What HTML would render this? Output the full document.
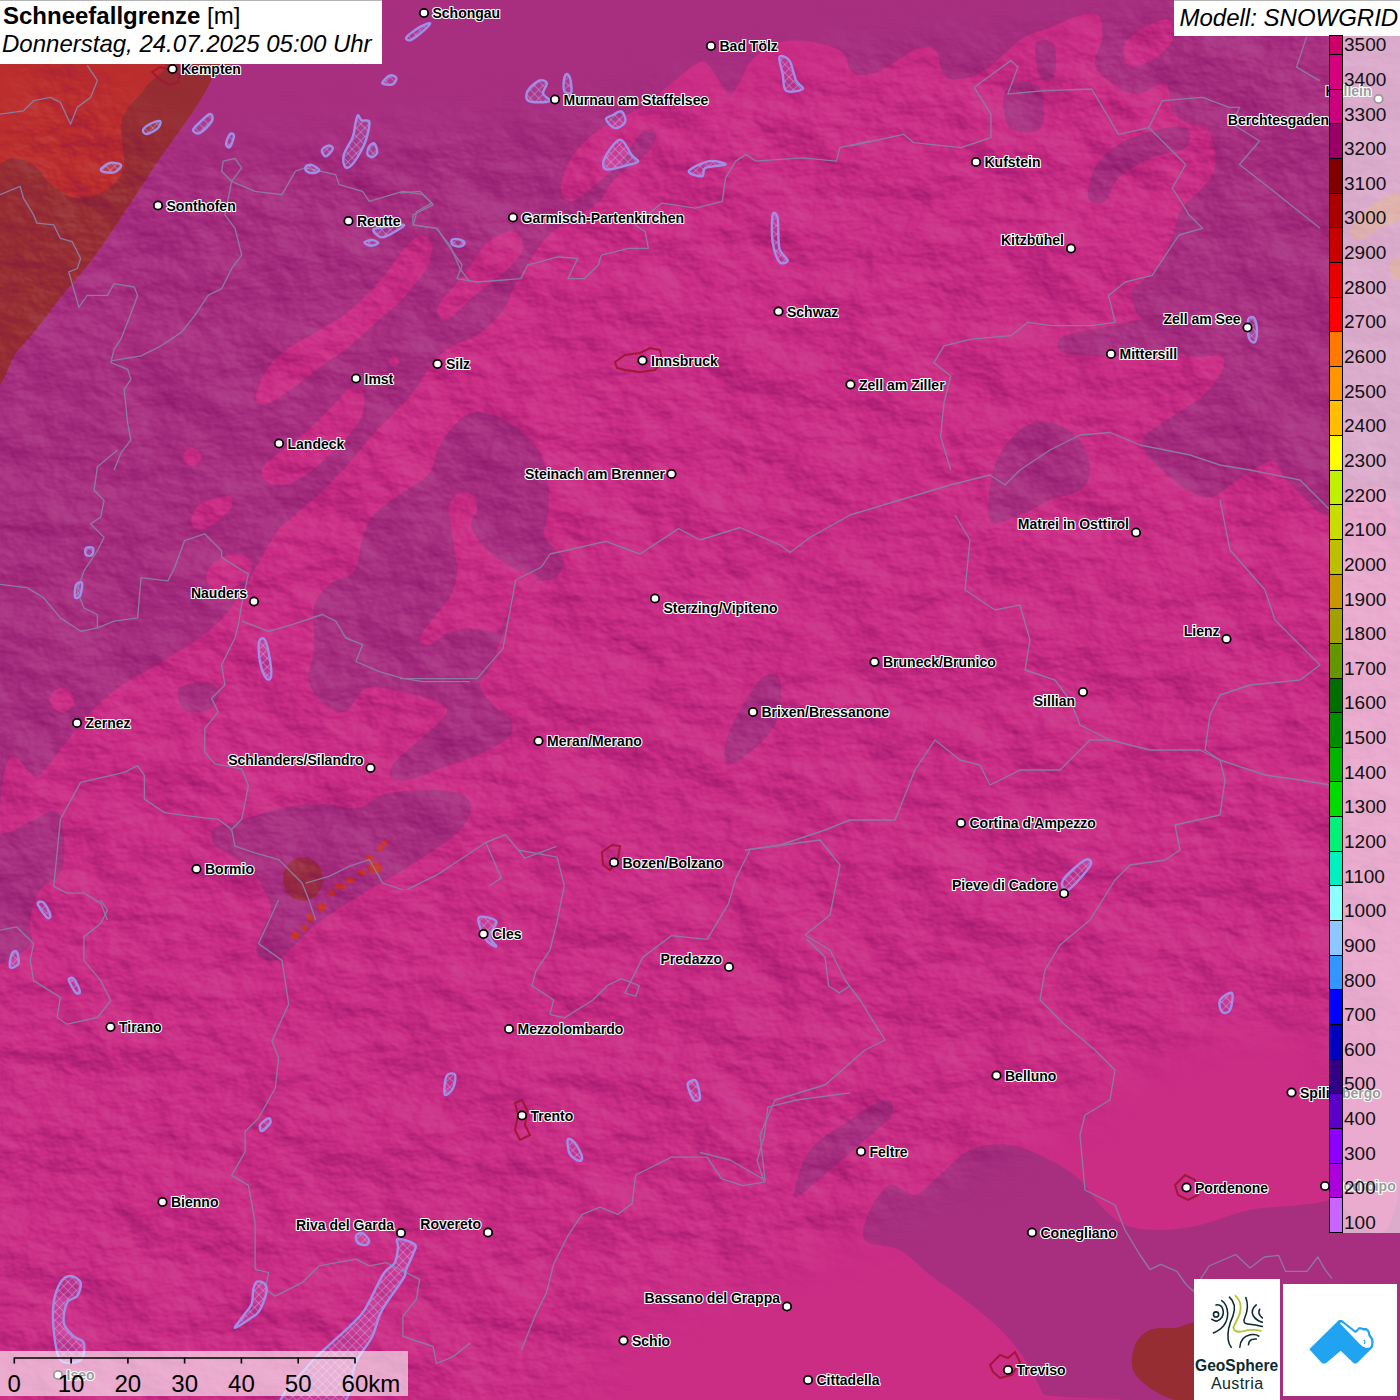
<!DOCTYPE html>
<html><head><meta charset="utf-8">
<style>
html,body{margin:0;padding:0;width:1400px;height:1400px;overflow:hidden;background:#a82f80;}
body{position:relative;font-family:"Liberation Sans",sans-serif;}
svg{position:absolute;left:0;top:0;}
#labels text{font-family:"Liberation Sans",sans-serif;font-size:14px;font-weight:bold;fill:#000;stroke:#fff;stroke-width:2.2px;paint-order:stroke;stroke-linejoin:round;}
.title{position:absolute;left:0;top:0;width:382px;height:64px;background:#fff;border-top:1px solid #b4b4b4;box-sizing:border-box;}
.t1{position:absolute;left:3px;top:1px;font-size:24px;font-weight:bold;white-space:nowrap;color:#000;}
.t1 span{font-weight:normal;}
.t2{position:absolute;left:2px;top:29px;font-size:24px;font-style:italic;white-space:nowrap;color:#000;}
.model{position:absolute;left:1173.5px;top:0;width:227px;height:35.5px;background:#fff;border-top:1px solid #b4b4b4;box-sizing:border-box;}
.model div{position:absolute;left:6px;top:3px;font-size:24px;font-style:italic;white-space:nowrap;}
.legbg{position:absolute;left:1343px;top:35px;width:57px;height:1198px;background:rgba(255,255,255,0.6);}
.bar{position:absolute;left:1329px;top:35px;width:14px;height:1198px;border:1px solid #000;box-sizing:border-box;overflow:hidden;}
.seg{position:absolute;left:0;width:12px;box-sizing:border-box;}
.lab{position:absolute;left:1344px;font-size:19px;color:#111;white-space:nowrap;line-height:22px;}
.scale{position:absolute;left:0;top:1351px;width:408px;height:45px;background:rgba(255,255,255,0.6);}
.sl{position:absolute;top:1370px;font-size:24px;line-height:28px;color:#000;white-space:nowrap;}
.geo{position:absolute;left:1194px;top:1279px;width:86px;height:121px;background:#fff;}
.snow{position:absolute;left:1283px;top:1284px;width:114px;height:112px;background:#fff;}
.g1{position:absolute;left:1px;top:78px;font-size:15.6px;font-weight:bold;color:#0b2a30;white-space:nowrap;}
.g2{position:absolute;left:17px;top:96px;font-size:16px;letter-spacing:0.4px;color:#0b2a30;white-space:nowrap;}
</style></head><body>
<svg width="1400" height="1400" viewBox="0 0 1400 1400">
<defs><pattern id="hatch" width="6" height="6" patternUnits="userSpaceOnUse" patternTransform="rotate(45)"><rect width="6" height="6" fill="rgba(190,160,240,0.12)"/><path d="M0,0 L0,6 M0,0 L6,0" stroke="rgba(205,190,255,0.75)" stroke-width="1"/></pattern></defs>
<rect x="0" y="0" width="1400" height="1400" fill="#a82f80"/>
<path d="M0.0,810.0 C6.7,705.8 26.7,789.2 40.0,775.0 C53.3,760.8 67.5,739.2 80.0,725.0 C92.5,710.8 100.8,700.8 115.0,690.0 C129.2,679.2 149.2,670.0 165.0,660.0 C180.8,650.0 197.5,640.8 210.0,630.0 C222.5,619.2 229.3,610.7 240.0,595.0 C250.7,579.3 265.0,549.2 274.0,536.0 C283.0,522.8 286.3,523.2 294.0,516.0 C301.7,508.8 311.8,500.7 320.0,493.0 C328.2,485.3 336.3,477.2 343.0,470.0 C349.7,462.8 354.3,456.7 360.0,450.0 C365.7,443.3 370.3,437.2 377.0,430.0 C383.7,422.8 393.3,414.2 400.0,407.0 C406.7,399.8 412.7,392.7 417.0,387.0 C421.3,381.3 421.2,379.2 426.0,373.0 C430.8,366.8 437.0,356.7 446.0,350.0 C455.0,343.3 470.5,339.7 480.0,333.0 C489.5,326.3 497.3,317.7 503.0,310.0 C508.7,302.3 509.8,294.7 514.0,287.0 C518.2,279.3 522.3,272.5 528.0,264.0 C533.7,255.5 539.8,244.0 548.0,236.0 C556.2,228.0 568.3,221.8 577.0,216.0 C585.7,210.2 594.2,206.7 600.0,201.0 C605.8,195.3 606.7,188.0 612.0,182.0 C617.3,176.0 625.7,170.3 632.0,165.0 C638.3,159.7 646.0,155.3 650.0,150.0 C654.0,144.7 656.8,136.3 656.0,133.0 C655.2,129.7 649.0,128.0 645.0,130.0 C641.0,132.0 635.8,139.7 632.0,145.0 C628.2,150.3 626.2,157.0 622.0,162.0 C617.8,167.0 612.8,170.0 607.0,175.0 C601.2,180.0 592.8,187.7 587.0,192.0 C581.2,196.3 576.2,200.5 572.0,201.0 C567.8,201.5 563.7,198.5 562.0,195.0 C560.3,191.5 560.3,186.3 562.0,180.0 C563.7,173.7 567.3,164.2 572.0,157.0 C576.7,149.8 583.3,142.8 590.0,137.0 C596.7,131.2 602.8,127.3 612.0,122.0 C621.2,116.7 634.5,112.0 645.0,105.0 C655.5,98.0 665.8,87.2 675.0,80.0 C684.2,72.8 694.2,64.2 700.0,62.0 C705.8,59.8 706.7,63.7 710.0,67.0 C713.3,70.3 716.7,77.5 720.0,82.0 C723.3,86.5 726.7,94.0 730.0,94.0 C733.3,94.0 736.7,87.3 740.0,82.0 C743.3,76.7 745.8,67.3 750.0,62.0 C754.2,56.7 759.7,53.3 765.0,50.0 C770.3,46.7 775.0,43.5 782.0,42.0 C789.0,40.5 798.7,40.2 807.0,41.0 C815.3,41.8 825.7,44.7 832.0,47.0 C838.3,49.3 842.0,51.2 845.0,55.0 C848.0,58.8 847.5,66.7 850.0,70.0 C852.5,73.3 855.5,74.6 860.0,75.0 C864.5,75.4 870.2,74.9 876.9,72.2 C883.6,69.5 893.7,62.6 900.4,58.7 C907.1,54.8 911.2,50.1 917.1,48.7 C923.0,47.3 931.1,45.9 935.6,50.4 C940.1,54.9 939.8,70.8 944.0,75.5 C948.2,80.2 954.1,79.7 960.8,78.9 C967.5,78.1 977.0,74.7 984.3,70.5 C991.6,66.3 997.7,59.3 1004.4,53.7 C1011.1,48.1 1016.8,41.4 1024.6,36.9 C1032.4,32.4 1041.9,30.5 1051.4,26.9 C1060.9,23.3 1073.8,16.9 1081.6,15.1 C1089.4,13.3 1094.9,12.5 1098.4,16.1 C1101.9,19.7 1103.0,28.9 1102.4,36.9 C1101.8,44.8 1094.0,56.5 1095.0,63.8 C1096.0,71.1 1101.8,75.6 1108.5,80.6 C1115.2,85.6 1125.8,93.5 1135.3,94.0 C1144.8,94.5 1159.3,81.1 1165.5,83.9 C1171.7,86.7 1168.4,104.1 1172.3,110.8 C1176.2,117.5 1183.4,121.4 1189.0,124.2 C1194.6,127.0 1201.6,123.7 1205.8,127.6 C1210.0,131.5 1212.8,140.4 1214.2,147.7 C1215.6,155.0 1216.7,163.9 1214.2,171.2 C1211.7,178.5 1204.4,185.2 1199.1,191.3 C1193.8,197.5 1186.8,200.8 1182.3,208.1 C1177.8,215.4 1175.6,226.1 1172.3,235.0 C1169.0,243.9 1166.7,254.5 1162.2,261.8 C1157.7,269.1 1150.4,273.6 1145.4,278.6 C1140.4,283.6 1133.1,285.9 1132.0,292.0 C1130.9,298.1 1134.2,308.8 1138.7,315.5 C1143.2,322.2 1151.0,325.6 1158.8,332.3 C1166.6,339.0 1175.6,351.9 1185.7,355.8 C1195.8,359.7 1213.2,353.6 1219.3,355.8 C1225.4,358.0 1225.4,362.5 1222.6,369.2 C1219.8,375.9 1210.9,388.3 1202.5,396.1 C1194.1,403.9 1181.9,409.6 1172.3,416.2 C1162.7,422.8 1149.5,430.0 1145.0,436.0 C1140.5,442.0 1142.2,446.3 1145.0,452.0 C1147.8,457.7 1155.0,463.7 1162.0,470.0 C1169.0,476.3 1178.7,485.5 1187.0,490.0 C1195.3,494.5 1203.7,498.7 1212.0,497.0 C1220.3,495.3 1228.7,485.3 1237.0,480.0 C1245.3,474.7 1255.7,468.0 1262.0,465.0 C1268.3,462.0 1270.8,459.5 1275.0,462.0 C1279.2,464.5 1280.8,472.8 1287.0,480.0 C1293.2,487.2 1304.8,498.8 1312.0,505.0 C1319.2,511.2 1315.3,511.2 1330.0,517.0 C1344.7,522.8 1388.3,429.5 1400.0,540.0 C1411.7,650.5 1411.7,1070.0 1400.0,1180.0 C1388.3,1290.0 1346.7,1195.8 1330.0,1200.0 C1313.3,1204.2 1313.3,1203.3 1300.0,1205.0 C1286.7,1206.7 1266.7,1206.7 1250.0,1210.0 C1233.3,1213.3 1215.0,1221.7 1200.0,1225.0 C1185.0,1228.3 1172.5,1230.0 1160.0,1230.0 C1147.5,1230.0 1135.0,1229.2 1125.0,1225.0 C1115.0,1220.8 1107.5,1212.5 1100.0,1205.0 C1092.5,1197.5 1088.3,1187.5 1080.0,1180.0 C1071.7,1172.5 1061.7,1165.8 1050.0,1160.0 C1038.3,1154.2 1023.3,1146.7 1010.0,1145.0 C996.7,1143.3 981.7,1145.0 970.0,1150.0 C958.3,1155.0 949.2,1167.5 940.0,1175.0 C930.8,1182.5 923.3,1193.3 915.0,1195.0 C906.7,1196.7 897.5,1182.5 890.0,1185.0 C882.5,1187.5 874.2,1200.8 870.0,1210.0 C865.8,1219.2 860.0,1233.3 865.0,1240.0 C870.0,1246.7 889.2,1244.2 900.0,1250.0 C910.8,1255.8 920.5,1267.7 930.0,1275.0 C939.5,1282.3 947.2,1286.7 957.0,1294.0 C966.8,1301.3 980.0,1311.2 989.0,1319.0 C998.0,1326.8 1004.3,1333.2 1011.0,1341.0 C1017.7,1348.8 1023.7,1357.2 1029.0,1366.0 C1034.3,1374.8 1040.2,1388.3 1043.0,1394.0 C1045.8,1399.7 1219.8,1399.0 1046.0,1400.0 C872.2,1401.0 174.3,1498.3 0.0,1400.0 C-174.3,1301.7 -6.7,914.2 0.0,810.0Z" fill="#cb2d85" />
<path d="M485.7,412.9 C494.3,414.3 505.7,419.8 514.3,425.7 C522.9,431.7 531.7,440.5 537.1,448.6 C542.6,456.7 545.2,464.3 547.1,474.3 C549.0,484.3 549.0,498.6 548.6,508.6 C548.1,518.6 543.1,527.4 544.3,534.3 C545.5,541.2 552.4,545.5 555.7,550.0 C559.0,554.5 564.5,556.7 564.3,561.4 C564.0,566.2 559.8,575.0 554.3,578.6 C548.8,582.1 538.1,579.3 531.4,582.9 C524.8,586.4 519.0,591.4 514.3,600.0 C509.5,608.6 506.7,623.3 502.9,634.3 C499.0,645.2 495.2,657.1 491.4,665.7 C487.6,674.3 479.0,678.6 480.0,685.7 C481.0,692.9 491.9,702.9 497.1,708.6 C502.4,714.3 509.5,715.2 511.4,720.0 C513.3,724.8 513.8,731.4 508.6,737.1 C503.3,742.9 491.4,749.0 480.0,754.3 C468.6,759.5 451.9,764.3 440.0,768.6 C428.1,772.9 416.7,778.6 408.6,780.0 C400.5,781.4 393.8,780.0 391.4,777.1 C389.0,774.3 389.0,769.5 394.3,762.9 C399.5,756.2 414.3,745.2 422.9,737.1 C431.4,729.0 442.9,720.0 445.7,714.3 C448.6,708.6 447.6,706.7 440.0,702.9 C432.4,699.0 412.4,693.8 400.0,691.4 C387.6,689.0 374.8,685.2 365.7,688.6 C356.7,691.9 352.9,709.0 345.7,711.4 C338.6,713.8 329.0,708.1 322.9,702.9 C316.7,697.6 310.0,689.0 308.6,680.0 C307.1,671.0 313.3,661.0 314.3,648.6 C315.2,636.2 311.4,616.7 314.3,605.7 C317.1,594.8 324.8,588.6 331.4,582.9 C338.1,577.1 349.0,579.0 354.3,571.4 C359.5,563.8 359.5,546.7 362.9,537.1 C366.2,527.6 368.1,521.4 374.3,514.3 C380.5,507.1 391.0,501.0 400.0,494.3 C409.0,487.6 421.9,482.4 428.6,474.3 C435.2,466.2 434.3,455.2 440.0,445.7 C445.7,436.2 455.2,422.6 462.9,417.1 C470.5,411.7 477.1,411.4 485.7,412.9Z" fill="#a82f80" />
<path d="M214.0,829.0 C217.7,825.3 224.7,825.5 236.0,822.0 C247.3,818.5 267.8,811.0 282.0,808.0 C296.2,805.0 308.5,804.0 321.0,804.0 C333.5,804.0 346.2,809.7 357.0,808.0 C367.8,806.3 374.0,797.0 386.0,794.0 C398.0,791.0 416.5,790.0 429.0,790.0 C441.5,790.0 454.0,791.0 461.0,794.0 C468.0,797.0 471.7,801.5 471.0,808.0 C470.3,814.5 467.0,823.5 457.0,833.0 C447.0,842.5 427.7,854.3 411.0,865.0 C394.3,875.7 373.2,886.8 357.0,897.0 C340.8,907.2 325.8,916.5 314.0,926.0 C302.2,935.5 293.2,948.2 286.0,954.0 C278.8,959.8 275.8,961.0 271.0,961.0 C266.2,961.0 258.7,958.7 257.0,954.0 C255.3,949.3 258.7,940.2 261.0,933.0 C263.3,925.8 270.5,918.2 271.0,911.0 C271.5,903.8 267.5,897.0 264.0,890.0 C260.5,883.0 255.8,875.0 250.0,869.0 C244.2,863.0 235.0,858.2 229.0,854.0 C223.0,849.8 216.5,848.2 214.0,844.0 C211.5,839.8 210.3,832.7 214.0,829.0Z" fill="#a82f80" />
<path d="M-10.0,850.0 C-5.8,828.3 7.3,835.2 15.0,830.0 C22.7,824.8 29.0,822.2 36.0,819.0 C43.0,815.8 52.3,807.5 57.0,811.0 C61.7,814.5 63.3,829.8 64.0,840.0 C64.7,850.2 65.0,863.7 61.0,872.0 C57.0,880.3 45.2,882.0 40.0,890.0 C34.8,898.0 31.7,910.8 30.0,920.0 C28.3,929.2 35.0,937.5 30.0,945.0 C25.0,952.5 6.7,962.5 0.0,965.0 C-6.7,967.5 -8.3,979.2 -10.0,960.0 C-11.7,940.8 -14.2,871.7 -10.0,850.0Z" fill="#a82f80" />
<path d="M178.0,690.0 C179.7,685.5 188.8,683.7 195.0,683.0 C201.2,682.3 211.2,683.2 215.0,686.0 C218.8,688.8 219.7,695.8 218.0,700.0 C216.3,704.2 210.5,709.3 205.0,711.0 C199.5,712.7 189.5,713.5 185.0,710.0 C180.5,706.5 176.3,694.5 178.0,690.0Z" fill="#a82f80" />
<path d="M990.0,520.0 C985.8,511.7 990.0,480.0 995.0,465.0 C1000.0,450.0 1010.8,437.2 1020.0,430.0 C1029.2,422.8 1040.0,420.3 1050.0,422.0 C1060.0,423.7 1073.3,432.0 1080.0,440.0 C1086.7,448.0 1090.0,461.7 1090.0,470.0 C1090.0,478.3 1086.7,485.0 1080.0,490.0 C1073.3,495.0 1060.0,495.8 1050.0,500.0 C1040.0,504.2 1030.0,511.7 1020.0,515.0 C1010.0,518.3 994.2,528.3 990.0,520.0Z" fill="#a82f80" />
<path d="M725.0,760.0 C723.3,755.0 724.2,743.3 730.0,730.0 C735.8,716.7 751.7,688.3 760.0,680.0 C768.3,671.7 777.5,672.5 780.0,680.0 C782.5,687.5 781.7,711.7 775.0,725.0 C768.3,738.3 748.3,754.2 740.0,760.0 C731.7,765.8 726.7,765.0 725.0,760.0Z" fill="#a82f80" />
<path d="M795.0,1190.0 C796.7,1182.5 800.8,1161.7 810.0,1150.0 C819.2,1138.3 837.5,1128.3 850.0,1120.0 C862.5,1111.7 878.0,1100.8 885.0,1100.0 C892.0,1099.2 895.3,1108.3 892.0,1115.0 C888.7,1121.7 875.3,1130.8 865.0,1140.0 C854.7,1149.2 840.8,1160.8 830.0,1170.0 C819.2,1179.2 805.8,1191.7 800.0,1195.0 C794.2,1198.3 793.3,1197.5 795.0,1190.0Z" fill="#a82f80" />
<path d="M1058.0,346.0 C1057.5,342.9 1057.0,338.8 1064.8,335.7 C1072.6,332.6 1090.5,330.1 1105.0,327.3 C1119.5,324.5 1137.8,318.4 1152.0,318.9 C1166.2,319.3 1183.7,324.5 1190.0,330.0 C1196.3,335.5 1196.3,348.0 1190.0,352.0 C1183.7,356.0 1163.9,353.4 1152.0,354.0 C1140.1,354.6 1132.6,355.8 1118.6,355.8 C1104.6,355.8 1078.1,355.6 1068.0,354.0 C1057.9,352.4 1058.5,349.1 1058.0,346.0Z" fill="#a82f80" />
<path d="M1036.0,43.0 C1038.3,37.7 1051.0,39.3 1054.0,45.0 C1057.0,50.7 1056.3,71.7 1054.0,77.0 C1051.7,82.3 1043.0,82.7 1040.0,77.0 C1037.0,71.3 1033.7,48.3 1036.0,43.0Z" fill="#a82f80" />
<path d="M1004.0,95.0 C1005.7,87.3 1013.8,82.8 1020.0,82.0 C1026.2,81.2 1037.5,82.3 1041.0,90.0 C1044.5,97.7 1046.2,121.7 1041.0,128.0 C1035.8,134.3 1016.2,133.5 1010.0,128.0 C1003.8,122.5 1002.3,102.7 1004.0,95.0Z" fill="#a82f80" />
<path d="M1088.3,198.0 C1086.6,192.4 1090.0,176.8 1095.0,167.8 C1100.0,158.9 1109.1,150.5 1118.6,144.3 C1128.1,138.2 1140.8,133.7 1152.0,130.9 C1163.2,128.1 1180.1,124.8 1185.7,127.6 C1191.3,130.4 1191.3,142.7 1185.7,147.7 C1180.1,152.7 1163.2,152.8 1152.0,157.8 C1140.8,162.8 1126.4,170.6 1118.6,177.9 C1110.8,185.2 1110.0,198.1 1105.0,201.4 C1100.0,204.8 1090.0,203.6 1088.3,198.0Z" fill="#a82f80" />
<path d="M457.1,494.3 C461.0,491.9 468.1,491.9 471.4,494.3 C474.8,496.7 477.1,503.3 477.1,508.6 C477.1,513.8 470.0,519.0 471.4,525.7 C472.9,532.4 478.6,541.4 485.7,548.6 C492.9,555.7 505.7,563.8 514.3,568.6 C522.9,573.3 536.7,572.9 537.1,577.1 C537.6,581.4 522.4,587.6 517.1,594.3 C511.9,601.0 509.0,611.0 505.7,617.1 C502.4,623.3 503.3,629.5 497.1,631.4 C491.0,633.3 477.1,628.1 468.6,628.6 C460.0,629.0 452.4,631.4 445.7,634.3 C439.0,637.1 432.9,645.2 428.6,645.7 C424.3,646.2 419.0,641.9 420.0,637.1 C421.0,632.4 429.0,624.3 434.3,617.1 C439.5,610.0 447.6,601.9 451.4,594.3 C455.2,586.7 456.7,579.0 457.1,571.4 C457.6,563.8 455.2,556.2 454.3,548.6 C453.3,541.0 452.4,532.4 451.4,525.7 C450.5,519.0 447.6,513.8 448.6,508.6 C449.5,503.3 453.3,496.7 457.1,494.3Z" fill="#cb2d85" />
<path d="M420.0,235.7 C424.3,235.2 430.0,239.5 431.4,244.3 C432.9,249.0 431.0,258.1 428.6,264.3 C426.2,270.5 421.9,275.2 417.1,281.4 C412.4,287.6 406.7,294.8 400.0,301.4 C393.3,308.1 385.7,313.8 377.1,321.4 C368.6,329.0 358.1,339.5 348.6,347.1 C339.0,354.8 329.0,360.5 320.0,367.1 C311.0,373.8 303.3,381.0 294.3,387.1 C285.2,393.3 272.1,402.9 265.7,404.3 C259.3,405.7 255.2,401.9 255.7,395.7 C256.2,389.5 263.6,374.8 268.6,367.1 C273.6,359.5 278.1,355.7 285.7,350.0 C293.3,344.3 304.8,338.6 314.3,332.9 C323.8,327.1 333.8,322.4 342.9,315.7 C351.9,309.0 361.0,300.5 368.6,292.9 C376.2,285.2 382.4,277.6 388.6,270.0 C394.8,262.4 400.5,252.9 405.7,247.1 C411.0,241.4 415.7,236.2 420.0,235.7Z" fill="#cb2d85" />
<path d="M508.6,231.4 C514.5,230.5 519.5,234.5 521.4,238.6 C523.3,242.6 523.6,249.5 520.0,255.7 C516.4,261.9 507.6,269.0 500.0,275.7 C492.4,282.4 482.9,288.6 474.3,295.7 C465.7,302.9 454.8,315.7 448.6,318.6 C442.4,321.4 438.1,316.2 437.1,312.9 C436.2,309.5 438.1,305.2 442.9,298.6 C447.6,291.9 458.6,281.9 465.7,272.9 C472.9,263.8 478.6,251.2 485.7,244.3 C492.9,237.4 502.6,232.4 508.6,231.4Z" fill="#cb2d85" />
<path d="M351.4,387.1 C356.7,384.8 361.0,388.6 362.9,392.9 C364.8,397.1 365.2,405.7 362.9,412.9 C360.5,420.0 354.3,428.6 348.6,435.7 C342.9,442.9 335.2,449.5 328.6,455.7 C321.9,461.9 315.7,468.1 308.6,472.9 C301.4,477.6 292.9,482.9 285.7,484.3 C278.6,485.7 269.5,484.3 265.7,481.4 C261.9,478.6 260.0,472.4 262.9,467.1 C265.7,461.9 275.2,456.2 282.9,450.0 C290.5,443.8 300.5,437.1 308.6,430.0 C316.7,422.9 324.3,414.3 331.4,407.1 C338.6,400.0 346.2,389.5 351.4,387.1Z" fill="#cb2d85" />
<path d="M228.6,495.7 C233.8,496.2 233.3,502.9 231.4,507.1 C229.5,511.4 222.4,517.6 217.1,521.4 C211.9,525.2 204.3,530.0 200.0,530.0 C195.7,530.0 191.4,525.7 191.4,521.4 C191.4,517.1 193.8,508.6 200.0,504.3 C206.2,500.0 223.3,495.2 228.6,495.7Z" fill="#cb2d85" />
<path d="M1125.0,43.6 C1127.8,37.2 1138.1,30.8 1145.4,26.9 C1152.7,23.0 1164.5,17.9 1169.0,20.1 C1173.5,22.3 1175.1,33.6 1172.3,40.3 C1169.5,47.0 1159.3,56.2 1152.0,60.4 C1144.7,64.6 1133.1,68.3 1128.6,65.5 C1124.1,62.7 1122.2,50.0 1125.0,43.6Z" fill="#cb2d85" />
<ellipse cx="229" cy="572" rx="24" ry="16" transform="rotate(-25 229 572)" fill="#cb2d85"/>
<circle cx="394" cy="361" r="5" fill="#cb2d85"/>
<circle cx="62" cy="700" r="12" fill="#cb2d85"/>
<circle cx="192" cy="457" r="9" fill="#cb2d85"/>
<path d="M-10.0,60.0 C27.3,8.3 177.0,57.0 214.0,60.0 C251.0,63.0 214.2,71.5 212.0,78.0 C209.8,84.5 205.8,91.0 201.0,99.0 C196.2,107.0 189.8,116.2 183.0,126.0 C176.2,135.8 167.7,146.8 160.0,158.0 C152.3,169.2 145.3,180.3 137.0,193.0 C128.7,205.7 118.3,221.8 110.0,234.0 C101.7,246.2 94.7,256.2 87.0,266.0 C79.3,275.8 71.7,283.5 64.0,293.0 C56.3,302.5 48.7,313.5 41.0,323.0 C33.3,332.5 26.5,342.2 18.0,350.0 C9.5,357.8 -5.3,418.3 -10.0,370.0 C-14.7,321.7 -47.3,111.7 -10.0,60.0Z" fill="#962d32" />
<path d="M-10.0,60.0 C17.5,43.7 129.0,55.5 155.0,60.0 C181.0,64.5 150.5,79.0 146.0,87.0 C141.5,95.0 132.2,101.8 128.0,108.0 C123.8,114.2 121.8,117.5 121.0,124.0 C120.2,130.5 122.7,139.3 123.0,147.0 C123.3,154.7 125.2,163.2 123.0,170.0 C120.8,176.8 116.0,183.5 110.0,188.0 C104.0,192.5 93.8,195.7 87.0,197.0 C80.2,198.3 75.2,198.3 69.0,196.0 C62.8,193.7 55.8,188.2 50.0,183.0 C44.2,177.8 40.0,169.2 34.0,165.0 C28.0,160.8 21.3,159.2 14.0,158.0 C6.7,156.8 -6.0,174.3 -10.0,158.0 C-14.0,141.7 -37.5,76.3 -10.0,60.0Z" fill="#bc2d2d" />
<ellipse cx="303" cy="879" rx="20" ry="22" fill="#962d32" opacity="0.8"/>
<path d="M1350.0,232.0 C1351.3,226.7 1359.7,214.5 1368.0,208.0 C1376.3,201.5 1394.7,191.3 1400.0,193.0 C1405.3,194.7 1403.3,212.2 1400.0,218.0 C1396.7,223.8 1386.7,224.3 1380.0,228.0 C1373.3,231.7 1365.0,239.3 1360.0,240.0 C1355.0,240.7 1348.7,237.3 1350.0,232.0Z" fill="#b0402e" />
<path d="M1390.0,262.0 C1391.3,259.0 1398.3,255.0 1400.0,258.0 C1401.7,261.0 1401.3,277.0 1400.0,280.0 C1398.7,283.0 1393.7,279.0 1392.0,276.0 C1390.3,273.0 1388.7,265.0 1390.0,262.0Z" fill="#b0402e" />
<ellipse cx="375" cy="868" rx="7" ry="6" fill="#c83228"/>
<ellipse cx="370" cy="858" rx="4" ry="3" fill="#c83228"/>
<ellipse cx="380" cy="848" rx="3" ry="3" fill="#c83228"/>
<ellipse cx="350" cy="880" rx="5" ry="3" fill="#c83228"/>
<ellipse cx="340" cy="886" rx="6" ry="3" fill="#c83228"/>
<ellipse cx="332" cy="893" rx="4" ry="3" fill="#c83228"/>
<ellipse cx="322" cy="907" rx="4" ry="4" fill="#c83228"/>
<ellipse cx="310" cy="918" rx="3" ry="5" fill="#c83228"/>
<ellipse cx="305" cy="928" rx="3" ry="3" fill="#c83228"/>
<ellipse cx="295" cy="935" rx="4" ry="4" fill="#c83228"/>
<ellipse cx="362" cy="873" rx="4" ry="3" fill="#c83228"/>
<ellipse cx="385" cy="843" rx="3" ry="3" fill="#c83228"/>
<path d="M1150.0,1330.0 C1143.3,1332.8 1137.8,1338.3 1135.0,1345.0 C1132.2,1351.7 1130.5,1362.8 1133.0,1370.0 C1135.5,1377.2 1143.0,1383.0 1150.0,1388.0 C1157.0,1393.0 1166.7,1398.0 1175.0,1400.0 C1183.3,1402.0 1195.8,1412.0 1200.0,1400.0 C1204.2,1388.0 1204.2,1340.0 1200.0,1328.0 C1195.8,1316.0 1183.3,1327.7 1175.0,1328.0 C1166.7,1328.3 1156.7,1327.2 1150.0,1330.0Z" fill="#962d32" />
<defs><filter id="hs" x="0" y="0" width="1400" height="1400" filterUnits="userSpaceOnUse" color-interpolation-filters="sRGB"><feTurbulence type="fractalNoise" baseFrequency="0.012 0.018" numOctaves="5" seed="11" result="n"/><feDiffuseLighting in="n" surfaceScale="9" diffuseConstant="1" lighting-color="#fff" result="L"><feDistantLight azimuth="315" elevation="45"/></feDiffuseLighting><feColorMatrix in="L" type="matrix" values="0 0 0 0 0.43  0 0 0 0 0  0 0 0 0 0.33  -0.9 0 0 0 0.636" result="dark"/><feColorMatrix in="L" type="matrix" values="0 0 0 0 1  0 0 0 0 1  0 0 0 0 1  0.35 0 0 0 -0.2475" result="light"/><feMerge><feMergeNode in="dark"/><feMergeNode in="light"/></feMerge></filter><filter id="mb"><feGaussianBlur stdDeviation="25"/></filter><mask id="mm" maskUnits="userSpaceOnUse" x="0" y="0" width="1400" height="1400"><path d="M0.0,150.0 C33.3,-58.3 133.3,153.3 200.0,150.0 C266.7,146.7 333.3,136.7 400.0,130.0 C466.7,123.3 533.3,121.7 600.0,110.0 C666.7,98.3 733.3,71.7 800.0,60.0 C866.7,48.3 900.0,43.3 1000.0,40.0 C1100.0,36.7 1333.3,-120.0 1400.0,40.0 C1466.7,200.0 1417.8,836.8 1400.0,1000.0 C1382.2,1163.2 1325.2,1013.0 1293.0,1019.0 C1260.8,1025.0 1235.7,1028.5 1207.0,1036.0 C1178.3,1043.5 1140.0,1051.7 1121.0,1064.0 C1102.0,1076.3 1104.3,1100.5 1093.0,1110.0 C1081.7,1119.5 1073.0,1111.5 1053.0,1121.0 C1033.0,1130.5 995.8,1153.7 973.0,1167.0 C950.2,1180.3 933.2,1191.5 916.0,1201.0 C898.8,1210.5 893.0,1212.5 870.0,1224.0 C847.0,1235.5 812.3,1257.3 778.0,1270.0 C743.7,1282.7 693.7,1288.3 664.0,1300.0 C634.3,1311.7 617.3,1323.3 600.0,1340.0 C582.7,1356.7 660.0,1390.0 560.0,1400.0 C460.0,1410.0 93.3,1608.3 0.0,1400.0 C-93.3,1191.7 -33.3,358.3 0.0,150.0Z" fill="#fff" filter="url(#mb)"/></mask></defs>
<g mask="url(#mm)"><rect width="1400" height="1400" filter="url(#hs)"/></g>
<path d="M0.0,114.1 L23.5,110.8 L33.6,100.7 L50.4,97.4 L60.4,102.4 L70.5,124.2 L77.2,107.4 L90.6,97.4 L97.4,80.6 L87.3,65.5" fill="none" stroke="#8c7aa0" stroke-width="1.35" stroke-linejoin="round"/>
<path d="M0.0,194.7 L20.1,186.3 L23.5,198.1 L33.6,214.9 L36.9,223.2 L53.7,224.9 L60.4,238.4 L72.2,241.7 L80.6,258.5 L77.2,268.6 L68.8,271.9 L78.9,307.2 L87.3,295.4 L107.4,295.4 L114.1,283.7 L134.3,287.0 L137.6,295.4 L127.6,322.3 L120.9,339.1 L114.1,349.1 L110.8,362.6 L127.6,369.3 L130.9,379.4 L124.2,389.4 L127.6,423.0 L130.9,439.8 L120.9,453.2 L114.1,470.0" fill="none" stroke="#8c7aa0" stroke-width="1.35" stroke-linejoin="round"/>
<path d="M110.8,360.9 L141.0,355.9 L161.1,345.8 L181.3,332.4 L194.7,315.6 L208.1,295.4 L221.6,288.7 L231.6,268.6 L241.7,255.1 L235.0,228.3 L224.9,214.9 L231.6,181.3 L241.7,167.9 L235.0,158.5 L223.2,161.1 L221.6,171.2 L231.6,181.3 L255.1,191.4 L282.0,194.7 L295.4,171.2 L305.5,167.9 L335.7,174.6 L339.1,184.6 L362.6,191.4 L369.3,201.4 L402.9,191.4 L423.0,194.7 L433.1,204.8 L412.9,214.9 L412.9,224.9 L436.4,228.3 L449.9,245.1 L459.9,268.6 L470.0,282.0" fill="none" stroke="#8c7aa0" stroke-width="1.35" stroke-linejoin="round"/>
<path d="M400.0,193.0 L420.1,191.4 L431.9,203.1 L416.8,211.5 L413.4,224.9 L436.9,228.3 L450.4,248.4 L462.1,265.2 L457.1,278.6 L477.2,282.0 L520.9,278.6 L527.6,265.2 L557.8,256.8 L577.9,258.5 L567.9,278.6 L584.6,278.6 L598.1,265.2 L601.4,255.1 L628.3,248.4 L648.4,248.4 L645.1,231.6 L635.0,224.9 L661.9,203.1 L695.4,208.1 L722.3,201.4 L725.6,177.9 L735.7,161.1 L745.8,154.4 L755.9,161.1 L802.9,157.8 L836.4,161.1 L839.8,147.7 L870.0,141.0" fill="none" stroke="#8c7aa0" stroke-width="1.35" stroke-linejoin="round"/>
<path d="M850.0,146.0 L903.7,134.3 L913.8,142.7 L960.8,147.7 L980.9,141.0 L991.0,137.6 L991.0,114.1 L974.2,87.3 L1011.1,60.4 L1017.9,67.1 L1007.8,94.0 L1044.7,90.6 L1091.7,89.0 L1118.6,134.3 L1148.8,127.6 L1162.2,100.7 L1202.5,97.4 L1229.4,107.4 L1239.4,107.4 L1232.7,124.2 L1259.6,141.0 L1239.4,164.5 L1269.6,188.0 L1320.0,228.3" fill="none" stroke="#8c7aa0" stroke-width="1.35" stroke-linejoin="round"/>
<path d="M1148.8,127.6 L1185.7,164.5 L1172.3,188.0 L1189.1,214.9 L1202.5,228.3 L1179.0,235.0 L1152.1,275.3 L1125.3,282.0 L1108.5,295.4 L1115.2,322.3 L1091.7,325.6 L1051.4,325.6 L1027.9,322.3 L1011.1,335.7 L970.9,339.1 L944.0,345.8 L933.9,362.6 L950.7,376.0 L944.0,402.9 L940.6,436.4 L950.7,470.0" fill="none" stroke="#8c7aa0" stroke-width="1.35" stroke-linejoin="round"/>
<path d="M1306.6,36.9 L1296.5,67.1 L1313.3,77.2 L1320.0,80.6" fill="none" stroke="#8c7aa0" stroke-width="1.35" stroke-linejoin="round"/>
<path d="M700.0,540.0 L740.0,527.5 L780.0,545.0 L790.0,552.5 L810.0,537.5 L850.0,515.0 L900.0,500.0 L950.0,485.0 L990.0,475.0 L1005.0,485.0 L1020.0,470.0 L1050.0,450.0 L1080.0,435.0 L1110.0,432.5 L1140.0,445.0 L1190.0,455.0 L1220.0,465.0 L1250.0,470.0 L1300.0,480.0 L1330.0,510.0" fill="none" stroke="#8c7aa0" stroke-width="1.35" stroke-linejoin="round"/>
<path d="M955.0,515.0 L970.0,540.0 L965.0,590.0 L995.0,610.0 L1020.0,605.0 L1030.0,640.0 L1025.0,670.0 L1055.0,680.0 L1070.0,700.0 L1080.0,725.0 L1110.0,740.0 L1150.0,750.0 L1200.0,750.0 L1220.0,760.0 L1265.0,775.0 L1300.0,780.0 L1330.0,785.0" fill="none" stroke="#8c7aa0" stroke-width="1.35" stroke-linejoin="round"/>
<path d="M1220.0,500.0 L1230.0,550.0 L1265.0,590.0 L1275.0,620.0 L1320.0,665.0 L1300.0,680.0 L1250.0,685.0 L1220.0,695.0 L1210.0,715.0 L1205.0,750.0 L1220.0,760.0" fill="none" stroke="#8c7aa0" stroke-width="1.35" stroke-linejoin="round"/>
<path d="M745.0,850.0 L780.0,845.0 L825.0,830.0 L850.0,820.0 L895.0,820.0 L915.0,770.0 L935.0,740.0 L960.0,760.0 L980.0,765.0 L990.0,785.0 L1020.0,770.0 L1060.0,770.0 L1090.0,740.0 L1110.0,740.0" fill="none" stroke="#8c7aa0" stroke-width="1.35" stroke-linejoin="round"/>
<path d="M0.0,584.3 L26.9,587.6 L43.6,597.7 L60.4,617.9 L80.6,631.3 L97.4,627.9 L114.1,621.2 L137.6,617.9 L141.0,577.6 L167.9,580.9 L174.6,567.5 L184.6,540.6 L204.8,533.9 L221.6,550.7 L221.6,557.4 L248.4,574.2 L241.7,604.4 L238.4,624.6 L235.0,638.0 L221.6,664.9 L224.9,685.0 L211.5,698.4 L218.2,711.9 L204.8,728.6 L204.8,752.1 L214.9,763.9 L241.7,768.9 L248.4,785.7 L241.7,819.3 L231.6,829.4 L218.2,819.3 L188.0,815.9 L164.5,812.6 L144.4,799.1 L144.4,775.6 L137.6,765.6 L124.2,772.3 L80.6,782.4 L60.4,819.3 L57.1,852.9 L53.7,886.4 L67.1,893.1 L83.9,893.1 L100.7,903.2 L107.4,920.0" fill="none" stroke="#8c7aa0" stroke-width="1.35" stroke-linejoin="round"/>
<path d="M117.5,450.0 L97.4,466.8 L94.0,490.3 L104.1,500.4 L100.7,517.1 L90.6,523.9 L104.1,537.3 L97.4,550.7 L83.9,570.9 L77.2,591.0 L83.9,607.8 L97.4,614.5 L97.4,627.9" fill="none" stroke="#8c7aa0" stroke-width="1.35" stroke-linejoin="round"/>
<path d="M231.6,829.4 L235.0,846.1 L255.1,852.9 L278.6,859.6 L302.1,883.1 L308.9,899.9 L315.6,920.0" fill="none" stroke="#8c7aa0" stroke-width="1.35" stroke-linejoin="round"/>
<path d="M305.5,883.1 L329.0,876.4 L349.1,866.3 L369.3,859.6 L382.7,883.1 L402.9,889.8" fill="none" stroke="#8c7aa0" stroke-width="1.35" stroke-linejoin="round"/>
<path d="M241.7,621.2 L268.6,631.3 L292.1,624.6 L322.3,614.5 L335.7,621.2 L345.8,638.0 L362.6,644.7 L355.9,661.5 L379.4,671.6 L402.9,678.3 L423.0,681.6 L470.0,681.6" fill="none" stroke="#8c7aa0" stroke-width="1.35" stroke-linejoin="round"/>
<path d="M517.9,850.0 L557.1,857.1 L564.3,885.7 L557.1,921.4 L550.0,950.0 L535.7,971.4 L532.1,985.7 L553.6,1000.0 L550.0,1014.3 L564.3,1017.9 L592.9,1000.0 L607.1,985.7 L621.4,978.6 L639.3,985.7 L635.7,996.4 L625.0,992.9 L642.9,957.1 L671.4,935.7 L707.1,939.3 L728.6,903.6 L735.7,878.6 L742.9,864.3 L750.0,850.0" fill="none" stroke="#8c7aa0" stroke-width="1.35" stroke-linejoin="round"/>
<path d="M807.1,939.3 L825.0,957.1 L828.6,985.7 L839.3,992.9 L850.0,985.7" fill="none" stroke="#8c7aa0" stroke-width="1.35" stroke-linejoin="round"/>
<path d="M850.0,1092.9 L796.4,1100.0 L767.9,1107.1 L764.3,1135.7 L757.1,1160.7 L764.3,1182.1 L742.9,1185.7 L721.4,1178.6 L707.1,1157.1 L671.4,1157.1 L635.7,1175.0 L632.1,1203.6 L617.9,1214.3 L600.0,1207.1 L582.1,1214.3 L567.9,1235.7 L553.6,1264.3 L546.4,1292.9 L535.7,1314.3 L528.6,1332.1 L521.4,1350.0" fill="none" stroke="#8c7aa0" stroke-width="1.35" stroke-linejoin="round"/>
<path d="M0.0,930.2 L16.8,926.9 L33.6,943.6 L30.2,960.4 L33.6,980.6 L60.4,997.4 L57.1,1017.5 L67.1,1024.2 L97.4,1017.5 L110.8,1000.7 L100.7,980.6 L83.9,960.4 L83.9,936.9 L100.7,923.5 L107.4,910.1 L100.7,900.0" fill="none" stroke="#8c7aa0" stroke-width="1.35" stroke-linejoin="round"/>
<path d="M278.6,900.0 L258.5,943.6 L282.0,960.4 L288.7,1004.1 L271.9,1041.0 L278.6,1057.8 L275.3,1088.0 L258.5,1118.2 L245.1,1131.6 L245.1,1151.8 L231.6,1175.3 L248.4,1185.4 L255.1,1222.3 L255.1,1269.3 L268.6,1272.6 L265.2,1289.4 L275.3,1296.1 L302.1,1282.7 L318.9,1265.9 L355.9,1259.2 L369.3,1265.9 L386.1,1262.6 L419.6,1279.4 L416.3,1299.5 L402.9,1316.3 L402.9,1336.4 L433.1,1346.5 L436.4,1363.3 L453.2,1356.6 L470.0,1343.1" fill="none" stroke="#8c7aa0" stroke-width="1.35" stroke-linejoin="round"/>
<path d="M700.0,1152.5 L730.0,1160.0 L765.0,1180.0 L760.0,1135.0 L775.0,1100.0 L825.0,1085.0 L865.0,1050.0 L885.0,1040.0 L860.0,1000.0 L845.0,980.0 L830.0,950.0 L805.0,935.0 L830.0,915.0 L840.0,865.0 L820.0,840.0 L745.0,850.0" fill="none" stroke="#8c7aa0" stroke-width="1.35" stroke-linejoin="round"/>
<path d="M1040.0,1000.0 L1065.0,1025.0 L1095.0,1050.0 L1115.0,1070.0 L1110.0,1100.0 L1085.0,1115.0 L1080.0,1135.0 L1085.0,1190.0 L1115.0,1205.0 L1125.0,1230.0 L1140.0,1255.0 L1150.0,1269.5" fill="none" stroke="#8c7aa0" stroke-width="1.35" stroke-linejoin="round"/>
<path d="M1150.0,1269.6 L1160.7,1264.3 L1176.8,1271.4 L1185.7,1284.0 L1192.9,1291.0 L1209.0,1266.0 L1235.7,1254.5 L1250.0,1268.0 L1264.3,1257.0 L1278.6,1255.4 L1285.7,1271.4 L1307.0,1271.4 L1317.9,1257.0 L1325.0,1269.6 L1332.0,1278.6" fill="none" stroke="#8c7aa0" stroke-width="1.35" stroke-linejoin="round"/>
<path d="M1040.0,1000.0 L1045.0,970.0 L1060.0,945.0 L1090.0,920.0 L1115.0,880.0 L1130.0,865.0 L1165.0,860.0 L1180.0,850.0 L1175.0,825.0 L1220.0,815.0 L1225.0,780.0 L1220.0,760.0" fill="none" stroke="#8c7aa0" stroke-width="1.35" stroke-linejoin="round"/>
<path d="M407.1,889.6 L438.6,873.9 L462.1,858.2 L485.7,842.5 L505.4,834.6 L525.0,858.2 L556.4,846.4" fill="none" stroke="#8c7aa0" stroke-width="1.35" stroke-linejoin="round"/>
<path d="M485.7,842.5 L501.4,877.9 L489.6,885.7" fill="none" stroke="#8c7aa0" stroke-width="1.35" stroke-linejoin="round"/>
<path d="M400.0,678.6 L477.0,678.6 L503.0,648.6 L515.7,580.0 L541.4,567.0 L550.0,554.0 L605.7,541.4 L640.0,554.0 L678.6,528.6 L700.0,540.0" fill="none" stroke="#8c7aa0" stroke-width="1.35" stroke-linejoin="round"/>
<path d="M615.0,362.0 L625.0,355.0 L640.0,353.0 L650.0,348.0 L660.0,350.0 L662.0,360.0 L655.0,370.0 L640.0,372.0 L625.0,370.0 L617.0,368.0Z" fill="none" stroke="#a01838" stroke-width="2"/>
<path d="M152.0,72.0 L160.0,67.0 L170.0,70.0 L180.0,75.0 L178.0,82.0 L170.0,85.0 L160.0,80.0Z" fill="none" stroke="#a01838" stroke-width="2"/>
<path d="M602.0,852.0 L612.0,845.0 L620.0,846.0 L618.0,858.0 L610.0,870.0 L603.0,865.0Z" fill="none" stroke="#a01838" stroke-width="2"/>
<path d="M515.0,1103.0 L522.0,1100.0 L527.0,1110.0 L525.0,1125.0 L530.0,1135.0 L520.0,1140.0 L515.0,1130.0 L518.0,1115.0Z" fill="none" stroke="#a01838" stroke-width="2"/>
<path d="M1175.0,1185.0 L1185.0,1175.0 L1195.0,1180.0 L1198.0,1195.0 L1188.0,1200.0 L1178.0,1195.0Z" fill="none" stroke="#a01838" stroke-width="2"/>
<path d="M990.0,1365.0 L1000.0,1355.0 L1008.0,1358.0 L1015.0,1352.0 L1020.0,1362.0 L1012.0,1375.0 L1000.0,1378.0 L993.0,1372.0Z" fill="none" stroke="#a01838" stroke-width="2"/>
<path d="M143.0,130.0 C143.5,128.3 147.2,125.5 150.0,124.0 C152.8,122.5 158.7,120.3 160.0,121.0 C161.3,121.7 160.2,125.8 158.0,128.0 C155.8,130.2 149.5,133.7 147.0,134.0 C144.5,134.3 142.5,131.7 143.0,130.0Z" fill="url(#hatch)" stroke="#a08ee8" stroke-width="2.4"/>
<path d="M193.0,130.0 C193.0,128.2 197.2,124.7 200.0,122.0 C202.8,119.3 208.0,114.2 210.0,114.0 C212.0,113.8 213.7,117.8 212.0,121.0 C210.3,124.2 203.2,131.5 200.0,133.0 C196.8,134.5 193.0,131.8 193.0,130.0Z" fill="url(#hatch)" stroke="#a08ee8" stroke-width="2.4"/>
<path d="M226.0,144.0 C226.0,141.8 228.7,135.3 230.0,134.0 C231.3,132.7 234.0,133.8 234.0,136.0 C234.0,138.2 231.3,145.7 230.0,147.0 C228.7,148.3 226.0,146.2 226.0,144.0Z" fill="url(#hatch)" stroke="#a08ee8" stroke-width="2.4"/>
<path d="M101.0,169.0 C102.0,167.5 106.7,163.7 110.0,163.0 C113.3,162.3 120.2,163.5 121.0,165.0 C121.8,166.5 117.8,170.8 115.0,172.0 C112.2,173.2 106.3,172.5 104.0,172.0 C101.7,171.5 100.0,170.5 101.0,169.0Z" fill="url(#hatch)" stroke="#a08ee8" stroke-width="2.4"/>
<path d="M446.5,1076.2 C448.2,1072.9 453.8,1072.6 454.9,1074.6 C456.0,1076.5 454.9,1084.6 453.2,1088.0 C451.5,1091.4 445.9,1096.7 444.8,1094.7 C443.7,1092.8 444.8,1079.6 446.5,1076.2Z" fill="url(#hatch)" stroke="#a08ee8" stroke-width="2.4"/>
<path d="M260.2,1124.9 C261.3,1122.8 266.9,1118.5 268.6,1118.2 C270.3,1117.9 271.4,1121.1 270.2,1123.2 C269.1,1125.4 263.5,1130.7 261.9,1131.0 C260.2,1131.3 259.1,1127.1 260.2,1124.9Z" fill="url(#hatch)" stroke="#a08ee8" stroke-width="2.4"/>
<path d="M37.6,904.0 C37.0,901.6 41.5,900.8 43.6,902.7 C45.8,904.5 49.8,912.6 50.4,915.1 C50.9,917.6 49.1,919.3 47.0,917.5 C44.9,915.6 38.2,906.5 37.6,904.0Z" fill="url(#hatch)" stroke="#a08ee8" stroke-width="2.4"/>
<path d="M11.8,953.7 C12.9,951.2 15.7,950.4 16.8,952.0 C17.9,953.7 19.6,961.3 18.5,963.8 C17.3,966.3 11.2,968.8 10.1,967.1 C9.0,965.5 10.6,956.2 11.8,953.7Z" fill="url(#hatch)" stroke="#a08ee8" stroke-width="2.4"/>
<path d="M68.8,979.9 C68.5,977.7 72.0,977.0 73.9,978.9 C75.7,980.8 79.6,989.1 79.9,991.3 C80.2,993.6 77.4,994.2 75.5,992.3 C73.7,990.4 69.1,982.1 68.8,979.9Z" fill="url(#hatch)" stroke="#a08ee8" stroke-width="2.4"/>
<path d="M527.6,90.9 C529.3,87.4 535.9,81.9 539.1,80.6 C542.4,79.3 546.2,81.0 546.9,83.1 C547.5,85.3 542.6,90.4 543.0,93.4 C543.4,96.4 551.8,99.9 549.4,101.1 C547.1,102.4 532.5,102.9 528.9,101.1 C525.2,99.4 525.9,94.3 527.6,90.9Z" fill="url(#hatch)" stroke="#a08ee8" stroke-width="2.4"/>
<path d="M566.1,74.1 C567.2,73.3 569.1,75.0 570.0,78.0 C570.9,81.0 572.1,89.8 571.3,92.1 C570.4,94.5 566.1,93.6 564.9,92.1 C563.6,90.6 563.4,86.1 563.6,83.1 C563.8,80.1 565.1,75.0 566.1,74.1Z" fill="url(#hatch)" stroke="#a08ee8" stroke-width="2.4"/>
<path d="M373.3,229.7 C373.7,228.0 379.9,228.0 384.9,227.1 C389.8,226.3 400.3,224.4 402.9,224.6 C405.4,224.8 403.7,226.3 400.3,228.4 C396.9,230.6 386.8,237.2 382.3,237.4 C377.8,237.6 372.9,231.4 373.3,229.7Z" fill="url(#hatch)" stroke="#a08ee8" stroke-width="2.4"/>
<path d="M364.3,242.6 C364.5,241.6 369.6,239.9 372.0,240.0 C374.4,240.1 378.6,242.1 378.4,243.1 C378.2,244.0 373.1,245.7 370.7,245.7 C368.4,245.6 364.1,243.5 364.3,242.6Z" fill="url(#hatch)" stroke="#a08ee8" stroke-width="2.4"/>
<path d="M451.7,240.0 C452.6,239.0 456.0,238.8 458.1,239.2 C460.3,239.7 464.1,241.4 464.6,242.6 C465.0,243.8 462.6,246.0 460.7,246.4 C458.8,246.9 454.5,246.2 453.0,245.1 C451.5,244.1 450.9,241.0 451.7,240.0Z" fill="url(#hatch)" stroke="#a08ee8" stroke-width="2.4"/>
<path d="M321.9,150.0 C322.3,148.2 326.4,145.8 328.3,145.6 C330.1,145.4 333.3,146.9 332.9,148.7 C332.5,150.5 327.6,156.2 325.7,156.4 C323.9,156.6 321.4,151.8 321.9,150.0Z" fill="url(#hatch)" stroke="#a08ee8" stroke-width="2.4"/>
<path d="M305.7,166.7 C306.5,165.7 309.3,164.4 311.6,164.9 C313.8,165.5 319.1,168.7 319.3,170.1 C319.5,171.4 315.0,173.0 312.9,173.1 C310.7,173.3 307.6,172.2 306.4,171.1 C305.2,170.0 304.8,167.7 305.7,166.7Z" fill="url(#hatch)" stroke="#a08ee8" stroke-width="2.4"/>
<path d="M382.3,83.1 C381.9,81.6 387.6,76.3 390.0,75.4 C392.4,74.6 396.0,76.5 396.4,78.0 C396.9,79.5 394.9,83.6 392.6,84.4 C390.2,85.3 382.7,84.6 382.3,83.1Z" fill="url(#hatch)" stroke="#a08ee8" stroke-width="2.4"/>
<path d="M259.0,642.0 C259.8,638.3 263.2,637.0 265.0,640.0 C266.8,643.0 269.0,653.8 270.0,660.0 C271.0,666.2 271.7,674.0 271.0,677.0 C270.3,680.0 267.8,680.5 266.0,678.0 C264.2,675.5 261.2,668.0 260.0,662.0 C258.8,656.0 258.2,645.7 259.0,642.0Z" fill="url(#hatch)" stroke="#a08ee8" stroke-width="2.4"/>
<path d="M76.0,585.0 C77.2,582.7 81.3,581.2 82.0,583.0 C82.7,584.8 81.2,593.7 80.0,596.0 C78.8,598.3 75.7,598.8 75.0,597.0 C74.3,595.2 74.8,587.3 76.0,585.0Z" fill="url(#hatch)" stroke="#a08ee8" stroke-width="2.4"/>
<path d="M86.0,548.0 C87.2,546.8 92.0,546.8 93.0,548.0 C94.0,549.2 93.2,553.8 92.0,555.0 C90.8,556.2 87.0,556.2 86.0,555.0 C85.0,553.8 84.8,549.2 86.0,548.0Z" fill="url(#hatch)" stroke="#a08ee8" stroke-width="2.4"/>
<path d="M1248.0,320.0 C1248.8,316.7 1252.5,316.3 1254.0,318.0 C1255.5,319.7 1256.8,326.0 1257.0,330.0 C1257.2,334.0 1256.3,340.7 1255.0,342.0 C1253.7,343.3 1250.2,341.7 1249.0,338.0 C1247.8,334.3 1247.2,323.3 1248.0,320.0Z" fill="url(#hatch)" stroke="#a08ee8" stroke-width="2.4"/>
<path d="M688.0,1083.0 C689.2,1081.5 694.0,1078.5 696.0,1081.0 C698.0,1083.5 700.3,1094.8 700.0,1098.0 C699.7,1101.2 695.8,1101.3 694.0,1100.0 C692.2,1098.7 690.0,1092.8 689.0,1090.0 C688.0,1087.2 686.8,1084.5 688.0,1083.0Z" fill="url(#hatch)" stroke="#a08ee8" stroke-width="2.4"/>
<path d="M1063.0,880.0 C1065.8,875.0 1080.5,862.3 1085.0,860.0 C1089.5,857.7 1092.8,861.0 1090.0,866.0 C1087.2,871.0 1072.5,887.7 1068.0,890.0 C1063.5,892.3 1060.2,885.0 1063.0,880.0Z" fill="url(#hatch)" stroke="#a08ee8" stroke-width="2.4"/>
<path d="M1220.0,1000.0 C1221.7,996.8 1230.3,991.3 1232.0,993.0 C1233.7,994.7 1231.7,1006.8 1230.0,1010.0 C1228.3,1013.2 1223.7,1013.7 1222.0,1012.0 C1220.3,1010.3 1218.3,1003.2 1220.0,1000.0Z" fill="url(#hatch)" stroke="#a08ee8" stroke-width="2.4"/>
<path d="M70.5,1276.0 C73.9,1276.0 79.5,1279.4 80.6,1282.7 C81.7,1286.0 79.5,1292.7 77.2,1296.0 C75.0,1299.3 69.3,1298.2 67.1,1302.7 C64.9,1307.2 62.7,1317.4 63.8,1323.0 C64.9,1328.6 70.4,1333.1 73.8,1336.4 C77.2,1339.7 82.8,1339.1 83.9,1343.0 C85.0,1346.9 84.5,1357.2 80.6,1360.0 C76.7,1362.8 64.9,1365.0 60.4,1360.0 C55.9,1355.0 54.8,1339.2 53.7,1329.7 C52.6,1320.2 52.6,1310.5 53.7,1302.7 C54.8,1294.9 57.6,1287.2 60.4,1282.7 C63.2,1278.2 67.1,1276.0 70.5,1276.0Z" fill="url(#hatch)" stroke="#a08ee8" stroke-width="2.4"/>
<path d="M398.0,1239.0 C400.8,1238.4 412.5,1242.1 415.0,1244.6 C417.5,1247.1 414.6,1249.7 413.0,1254.0 C411.4,1258.3 407.2,1266.6 405.7,1270.6 C404.2,1274.6 406.9,1272.8 403.8,1278.0 C400.7,1283.2 391.0,1295.8 387.0,1302.0 C383.0,1308.2 382.2,1309.2 379.7,1315.0 C377.2,1320.8 376.0,1329.0 372.0,1337.0 C368.0,1345.0 360.8,1351.7 355.6,1363.0 C350.4,1374.3 353.1,1398.0 340.7,1405.0 C328.3,1412.0 286.6,1411.3 281.0,1405.0 C275.4,1398.7 298.6,1377.3 307.0,1367.0 C315.4,1356.7 324.2,1349.8 331.4,1343.0 C338.6,1336.2 344.4,1331.6 350.0,1326.0 C355.6,1320.4 359.2,1318.3 364.8,1309.6 C370.4,1300.9 378.4,1281.8 383.4,1274.0 C388.4,1266.2 392.2,1267.3 394.6,1263.0 C397.0,1258.7 397.4,1252.0 398.0,1248.0 C398.6,1244.0 395.2,1239.6 398.0,1239.0Z" fill="url(#hatch)" stroke="#a08ee8" stroke-width="2.4"/>
<path d="M356.0,1236.0 C356.7,1234.3 359.8,1232.3 362.0,1233.0 C364.2,1233.7 368.3,1238.0 369.0,1240.0 C369.7,1242.0 367.8,1244.5 366.0,1245.0 C364.2,1245.5 359.7,1244.5 358.0,1243.0 C356.3,1241.5 355.3,1237.7 356.0,1236.0Z" fill="url(#hatch)" stroke="#a08ee8" stroke-width="2.4"/>
<path d="M257.0,1281.7 C258.9,1280.8 263.0,1281.8 264.6,1283.6 C266.2,1285.4 267.3,1288.2 266.4,1292.8 C265.5,1297.4 261.8,1307.1 259.0,1311.4 C256.2,1315.7 253.7,1316.0 249.7,1318.8 C245.7,1321.6 235.8,1328.6 234.9,1328.0 C234.0,1327.4 241.2,1319.0 244.0,1315.0 C246.8,1311.0 250.0,1308.3 251.6,1304.0 C253.2,1299.7 252.5,1292.7 253.4,1289.0 C254.3,1285.3 255.1,1282.6 257.0,1281.7Z" fill="url(#hatch)" stroke="#a08ee8" stroke-width="2.4"/>
<path d="M357.9,115.3 C358.9,114.6 359.8,119.4 361.7,120.4 C363.6,121.5 368.6,118.9 369.4,121.7 C370.3,124.5 368.1,132.4 366.9,137.1 C365.6,141.9 364.3,145.3 361.7,150.0 C359.1,154.7 354.2,162.6 351.4,165.4 C348.6,168.2 346.3,168.4 345.0,166.7 C343.7,165.0 342.4,160.1 343.7,155.1 C345.0,150.2 350.8,142.3 352.7,137.1 C354.6,132.0 354.4,127.9 355.3,124.3 C356.1,120.6 356.8,115.9 357.9,115.3Z" fill="url(#hatch)" stroke="#a08ee8" stroke-width="2.4"/>
<path d="M369.4,146.1 C370.6,144.4 373.3,142.5 374.6,143.6 C375.9,144.6 377.6,150.3 377.1,152.6 C376.7,154.8 373.6,157.0 372.0,157.2 C370.4,157.4 367.8,155.7 367.4,153.9 C366.9,152.0 368.2,147.9 369.4,146.1Z" fill="url(#hatch)" stroke="#a08ee8" stroke-width="2.4"/>
<path d="M604.7,157.7 C607.1,152.8 615.6,140.1 620.1,139.7 C624.6,139.3 628.7,151.5 631.7,155.1 C634.7,158.8 639.0,159.9 638.1,161.6 C637.3,163.3 631.9,164.1 626.6,165.4 C621.2,166.7 609.6,170.6 606.0,169.3 C602.4,168.0 602.4,162.6 604.7,157.7Z" fill="url(#hatch)" stroke="#a08ee8" stroke-width="2.4"/>
<path d="M606.0,119.1 C605.6,117.0 609.9,116.6 612.4,115.3 C615.0,114.0 619.3,110.4 621.4,111.4 C623.6,112.5 626.4,118.9 625.3,121.7 C624.2,124.5 618.2,128.6 615.0,128.1 C611.8,127.7 606.4,121.3 606.0,119.1Z" fill="url(#hatch)" stroke="#a08ee8" stroke-width="2.4"/>
<path d="M779.4,57.1 C780.5,54.8 786.6,56.5 789.4,60.4 C792.2,64.3 793.9,75.8 796.1,80.6 C798.4,85.3 804.5,87.3 802.9,89.0 C801.2,90.6 789.4,93.2 786.1,90.6 C782.7,88.1 783.8,79.5 782.7,73.9 C781.6,68.3 778.2,59.3 779.4,57.1Z" fill="url(#hatch)" stroke="#a08ee8" stroke-width="2.4"/>
<path d="M772.6,214.9 C773.5,210.9 776.6,212.6 777.7,218.2 C778.8,223.8 777.7,241.4 779.4,248.4 C781.0,255.4 787.8,257.9 787.8,260.2 C787.8,262.4 781.9,264.9 779.4,261.9 C776.8,258.8 773.8,249.5 772.6,241.7 C771.5,233.9 771.8,218.8 772.6,214.9Z" fill="url(#hatch)" stroke="#a08ee8" stroke-width="2.4"/>
<path d="M688.7,171.2 C689.8,168.7 702.7,162.3 708.9,161.1 C715.0,160.0 726.2,163.4 725.6,164.5 C725.1,165.6 709.4,165.9 705.5,167.9 C701.6,169.8 704.9,175.7 702.1,176.2 C699.3,176.8 687.6,173.7 688.7,171.2Z" fill="url(#hatch)" stroke="#a08ee8" stroke-width="2.4"/>
<path d="M406.7,36.9 C408.4,34.7 416.2,29.1 420.1,26.9 C424.1,24.6 430.2,22.4 430.2,23.5 C430.2,24.6 423.5,30.8 420.1,33.6 C416.8,36.4 412.3,39.7 410.1,40.3 C407.8,40.8 405.0,39.2 406.7,36.9Z" fill="url(#hatch)" stroke="#a08ee8" stroke-width="2.4"/>
<path d="M567.9,1139.3 C568.8,1137.5 572.6,1139.9 575.0,1142.9 C577.4,1145.8 581.5,1154.2 582.1,1157.1 C582.7,1160.1 580.7,1161.3 578.6,1160.7 C576.5,1160.1 571.4,1157.1 569.6,1153.6 C567.9,1150.0 567.0,1141.1 567.9,1139.3Z" fill="url(#hatch)" stroke="#a08ee8" stroke-width="2.4"/>
<path d="M478.6,917.9 C480.4,914.9 494.6,918.5 496.4,921.4 C498.2,924.4 489.3,931.5 489.3,935.7 C489.3,939.9 497.0,945.8 496.4,946.4 C495.8,947.0 488.7,944.0 485.7,939.3 C482.7,934.5 476.8,920.8 478.6,917.9Z" fill="url(#hatch)" stroke="#a08ee8" stroke-width="2.4"/>
</svg>
<svg id="labels" width="1400" height="1400" viewBox="0 0 1400 1400">
<circle cx="424" cy="13" r="4.2" fill="#fff" stroke="#000" stroke-width="1.8"/>
<text x="432.5" y="18" text-anchor="start">Schongau</text>
<circle cx="711" cy="46" r="4.2" fill="#fff" stroke="#000" stroke-width="1.8"/>
<text x="719.5" y="51" text-anchor="start">Bad Tölz</text>
<circle cx="172.5" cy="69" r="4.2" fill="#fff" stroke="#000" stroke-width="1.8"/>
<text x="181.0" y="74" text-anchor="start">Kempten</text>
<circle cx="555" cy="99.5" r="4.2" fill="#fff" stroke="#000" stroke-width="1.8"/>
<text x="563.5" y="104.5" text-anchor="start">Murnau am Staffelsee</text>
<circle cx="1378.5" cy="99" r="4.2" fill="#fff" stroke="#000" stroke-width="1.8"/>
<text x="1371.5" y="95.5" text-anchor="end">Hallein</text>
<circle cx="1336" cy="128" r="4.2" fill="#fff" stroke="#000" stroke-width="1.8"/>
<text x="1329" y="124.5" text-anchor="end">Berchtesgaden</text>
<circle cx="976" cy="162" r="4.2" fill="#fff" stroke="#000" stroke-width="1.8"/>
<text x="984.5" y="167" text-anchor="start">Kufstein</text>
<circle cx="158" cy="205.5" r="4.2" fill="#fff" stroke="#000" stroke-width="1.8"/>
<text x="166.5" y="210.5" text-anchor="start">Sonthofen</text>
<circle cx="348.5" cy="221" r="4.2" fill="#fff" stroke="#000" stroke-width="1.8"/>
<text x="357.0" y="226" text-anchor="start">Reutte</text>
<circle cx="513" cy="217.5" r="4.2" fill="#fff" stroke="#000" stroke-width="1.8"/>
<text x="521.5" y="222.5" text-anchor="start">Garmisch-Partenkirchen</text>
<circle cx="1071" cy="248.5" r="4.2" fill="#fff" stroke="#000" stroke-width="1.8"/>
<text x="1064" y="245.0" text-anchor="end">Kitzbühel</text>
<circle cx="778.5" cy="311.5" r="4.2" fill="#fff" stroke="#000" stroke-width="1.8"/>
<text x="787.0" y="316.5" text-anchor="start">Schwaz</text>
<circle cx="1247.5" cy="327.5" r="4.2" fill="#fff" stroke="#000" stroke-width="1.8"/>
<text x="1240.5" y="324.0" text-anchor="end">Zell am See</text>
<circle cx="1111" cy="354" r="4.2" fill="#fff" stroke="#000" stroke-width="1.8"/>
<text x="1119.5" y="359" text-anchor="start">Mittersill</text>
<circle cx="642.5" cy="360.5" r="4.2" fill="#fff" stroke="#000" stroke-width="1.8"/>
<text x="651.0" y="365.5" text-anchor="start">Innsbruck</text>
<circle cx="437.5" cy="364" r="4.2" fill="#fff" stroke="#000" stroke-width="1.8"/>
<text x="446.0" y="369" text-anchor="start">Silz</text>
<circle cx="356" cy="378.5" r="4.2" fill="#fff" stroke="#000" stroke-width="1.8"/>
<text x="364.5" y="383.5" text-anchor="start">Imst</text>
<circle cx="850.5" cy="384.5" r="4.2" fill="#fff" stroke="#000" stroke-width="1.8"/>
<text x="859.0" y="389.5" text-anchor="start">Zell am Ziller</text>
<circle cx="279" cy="443.5" r="4.2" fill="#fff" stroke="#000" stroke-width="1.8"/>
<text x="287.5" y="448.5" text-anchor="start">Landeck</text>
<circle cx="671.5" cy="474" r="4.2" fill="#fff" stroke="#000" stroke-width="1.8"/>
<text x="665.0" y="479" text-anchor="end">Steinach am Brenner</text>
<circle cx="1136" cy="532.5" r="4.2" fill="#fff" stroke="#000" stroke-width="1.8"/>
<text x="1129" y="529.0" text-anchor="end">Matrei in Osttirol</text>
<circle cx="254" cy="601.5" r="4.2" fill="#fff" stroke="#000" stroke-width="1.8"/>
<text x="247" y="598.0" text-anchor="end">Nauders</text>
<circle cx="655" cy="598.5" r="4.2" fill="#fff" stroke="#000" stroke-width="1.8"/>
<text x="663.5" y="612.5" text-anchor="start">Sterzing/Vipiteno</text>
<circle cx="1226.5" cy="639" r="4.2" fill="#fff" stroke="#000" stroke-width="1.8"/>
<text x="1219.5" y="635.5" text-anchor="end">Lienz</text>
<circle cx="874.5" cy="662" r="4.2" fill="#fff" stroke="#000" stroke-width="1.8"/>
<text x="883.0" y="667" text-anchor="start">Bruneck/Brunico</text>
<circle cx="1083" cy="692" r="4.2" fill="#fff" stroke="#000" stroke-width="1.8"/>
<text x="1075" y="706" text-anchor="end">Sillian</text>
<circle cx="753" cy="712" r="4.2" fill="#fff" stroke="#000" stroke-width="1.8"/>
<text x="761.5" y="717" text-anchor="start">Brixen/Bressanone</text>
<circle cx="77" cy="723" r="4.2" fill="#fff" stroke="#000" stroke-width="1.8"/>
<text x="85.5" y="728" text-anchor="start">Zernez</text>
<circle cx="538.5" cy="741" r="4.2" fill="#fff" stroke="#000" stroke-width="1.8"/>
<text x="547.0" y="746" text-anchor="start">Meran/Merano</text>
<circle cx="370.5" cy="768" r="4.2" fill="#fff" stroke="#000" stroke-width="1.8"/>
<text x="363.5" y="764.5" text-anchor="end">Schlanders/Silandro</text>
<circle cx="961" cy="823" r="4.2" fill="#fff" stroke="#000" stroke-width="1.8"/>
<text x="969.5" y="828" text-anchor="start">Cortina d&#39;Ampezzo</text>
<circle cx="614" cy="862.5" r="4.2" fill="#fff" stroke="#000" stroke-width="1.8"/>
<text x="622.5" y="867.5" text-anchor="start">Bozen/Bolzano</text>
<circle cx="196.5" cy="869" r="4.2" fill="#fff" stroke="#000" stroke-width="1.8"/>
<text x="205.0" y="874" text-anchor="start">Bormio</text>
<circle cx="1064" cy="893.5" r="4.2" fill="#fff" stroke="#000" stroke-width="1.8"/>
<text x="1057" y="890.0" text-anchor="end">Pieve di Cadore</text>
<circle cx="483.5" cy="934" r="4.2" fill="#fff" stroke="#000" stroke-width="1.8"/>
<text x="492.0" y="939" text-anchor="start">Cles</text>
<circle cx="729" cy="967" r="4.2" fill="#fff" stroke="#000" stroke-width="1.8"/>
<text x="722" y="963.5" text-anchor="end">Predazzo</text>
<circle cx="110.5" cy="1027" r="4.2" fill="#fff" stroke="#000" stroke-width="1.8"/>
<text x="119.0" y="1032" text-anchor="start">Tirano</text>
<circle cx="509" cy="1029" r="4.2" fill="#fff" stroke="#000" stroke-width="1.8"/>
<text x="517.5" y="1034" text-anchor="start">Mezzolombardo</text>
<circle cx="996.5" cy="1075.5" r="4.2" fill="#fff" stroke="#000" stroke-width="1.8"/>
<text x="1005.0" y="1080.5" text-anchor="start">Belluno</text>
<circle cx="1291.5" cy="1092.5" r="4.2" fill="#fff" stroke="#000" stroke-width="1.8"/>
<text x="1300.0" y="1097.5" text-anchor="start">Spilimbergo</text>
<circle cx="522" cy="1115.5" r="4.2" fill="#fff" stroke="#000" stroke-width="1.8"/>
<text x="530.5" y="1120.5" text-anchor="start">Trento</text>
<circle cx="861" cy="1151.5" r="4.2" fill="#fff" stroke="#000" stroke-width="1.8"/>
<text x="869.5" y="1156.5" text-anchor="start">Feltre</text>
<circle cx="1186.5" cy="1187.5" r="4.2" fill="#fff" stroke="#000" stroke-width="1.8"/>
<text x="1195.0" y="1192.5" text-anchor="start">Pordenone</text>
<circle cx="1325" cy="1186" r="4.2" fill="#fff" stroke="#000" stroke-width="1.8"/>
<text x="1333.5" y="1191" text-anchor="start">Codroipo</text>
<circle cx="162.5" cy="1202" r="4.2" fill="#fff" stroke="#000" stroke-width="1.8"/>
<text x="171.0" y="1207" text-anchor="start">Bienno</text>
<circle cx="401" cy="1233" r="4.2" fill="#fff" stroke="#000" stroke-width="1.8"/>
<text x="394" y="1229.5" text-anchor="end">Riva del Garda</text>
<circle cx="488" cy="1232.5" r="4.2" fill="#fff" stroke="#000" stroke-width="1.8"/>
<text x="481" y="1229.0" text-anchor="end">Rovereto</text>
<circle cx="1032" cy="1232.5" r="4.2" fill="#fff" stroke="#000" stroke-width="1.8"/>
<text x="1040.5" y="1237.5" text-anchor="start">Conegliano</text>
<circle cx="787" cy="1306.5" r="4.2" fill="#fff" stroke="#000" stroke-width="1.8"/>
<text x="780" y="1303.0" text-anchor="end">Bassano del Grappa</text>
<circle cx="623.5" cy="1340.5" r="4.2" fill="#fff" stroke="#000" stroke-width="1.8"/>
<text x="632.0" y="1345.5" text-anchor="start">Schio</text>
<circle cx="1008" cy="1370" r="4.2" fill="#fff" stroke="#000" stroke-width="1.8"/>
<text x="1016.5" y="1375" text-anchor="start">Treviso</text>
<circle cx="808" cy="1380" r="4.2" fill="#fff" stroke="#000" stroke-width="1.8"/>
<text x="816.5" y="1385" text-anchor="start">Cittadella</text>
<circle cx="58" cy="1375" r="4.2" fill="#fff" stroke="#000" stroke-width="1.8"/>
<text x="66.5" y="1380" text-anchor="start">Iseo</text>
</svg>
<div class="title"><div class="t1">Schneefallgrenze <span>[m]</span></div><div class="t2">Donnerstag, 24.07.2025 05:00 Uhr</div></div>
<div class="model"><div>Modell: SNOWGRID</div></div>
<div class="legbg"></div>
<div class="bar"><div class="seg" style="top:0px;height:19.0px;background:rgb(204, 0, 102);"></div><div class="seg" style="top:18.04px;height:35.64px;background:rgb(214, 0, 127);border-top:1px solid #000;"></div><div class="seg" style="top:52.68px;height:35.64px;background:rgb(204, 0, 127);border-top:1px solid #000;"></div><div class="seg" style="top:87.32px;height:35.64px;background:rgb(153, 0, 102);border-top:1px solid #000;"></div><div class="seg" style="top:121.96px;height:35.64px;background:rgb(128, 0, 0);border-top:1px solid #000;"></div><div class="seg" style="top:156.60px;height:35.64px;background:rgb(170, 0, 0);border-top:1px solid #000;"></div><div class="seg" style="top:191.24px;height:35.64px;background:rgb(200, 0, 0);border-top:1px solid #000;"></div><div class="seg" style="top:225.88px;height:35.64px;background:rgb(230, 0, 0);border-top:1px solid #000;"></div><div class="seg" style="top:260.52px;height:35.64px;background:rgb(255, 0, 0);border-top:1px solid #000;"></div><div class="seg" style="top:295.16px;height:35.64px;background:rgb(255, 120, 0);border-top:1px solid #000;"></div><div class="seg" style="top:329.80px;height:35.64px;background:rgb(255, 150, 0);border-top:1px solid #000;"></div><div class="seg" style="top:364.44px;height:35.64px;background:rgb(255, 190, 0);border-top:1px solid #000;"></div><div class="seg" style="top:399.08px;height:35.64px;background:rgb(255, 255, 0);border-top:1px solid #000;"></div><div class="seg" style="top:433.72px;height:35.64px;background:rgb(190, 240, 0);border-top:1px solid #000;"></div><div class="seg" style="top:468.36px;height:35.64px;background:rgb(200, 220, 0);border-top:1px solid #000;"></div><div class="seg" style="top:503.00px;height:35.64px;background:rgb(190, 190, 0);border-top:1px solid #000;"></div><div class="seg" style="top:537.64px;height:35.64px;background:rgb(200, 150, 0);border-top:1px solid #000;"></div><div class="seg" style="top:572.28px;height:35.64px;background:rgb(160, 160, 0);border-top:1px solid #000;"></div><div class="seg" style="top:606.92px;height:35.64px;background:rgb(100, 150, 0);border-top:1px solid #000;"></div><div class="seg" style="top:641.56px;height:35.64px;background:rgb(0, 110, 0);border-top:1px solid #000;"></div><div class="seg" style="top:676.20px;height:35.64px;background:rgb(0, 140, 0);border-top:1px solid #000;"></div><div class="seg" style="top:710.84px;height:35.64px;background:rgb(0, 180, 0);border-top:1px solid #000;"></div><div class="seg" style="top:745.48px;height:35.64px;background:rgb(0, 220, 0);border-top:1px solid #000;"></div><div class="seg" style="top:780.12px;height:35.64px;background:rgb(0, 240, 120);border-top:1px solid #000;"></div><div class="seg" style="top:814.76px;height:35.64px;background:rgb(0, 240, 190);border-top:1px solid #000;"></div><div class="seg" style="top:849.40px;height:35.64px;background:rgb(140, 255, 255);border-top:1px solid #000;"></div><div class="seg" style="top:884.04px;height:35.64px;background:rgb(140, 200, 255);border-top:1px solid #000;"></div><div class="seg" style="top:918.68px;height:35.64px;background:rgb(50, 150, 255);border-top:1px solid #000;"></div><div class="seg" style="top:953.32px;height:35.64px;background:rgb(0, 0, 255);border-top:1px solid #000;"></div><div class="seg" style="top:987.96px;height:35.64px;background:rgb(0, 0, 190);border-top:1px solid #000;"></div><div class="seg" style="top:1022.60px;height:35.64px;background:rgb(50, 0, 130);border-top:1px solid #000;"></div><div class="seg" style="top:1057.24px;height:35.64px;background:rgb(90, 0, 200);border-top:1px solid #000;"></div><div class="seg" style="top:1091.88px;height:35.64px;background:rgb(140, 0, 255);border-top:1px solid #000;"></div><div class="seg" style="top:1126.52px;height:35.64px;background:rgb(170, 0, 220);border-top:1px solid #000;"></div><div class="seg" style="top:1161.16px;height:35.64px;background:rgb(200, 100, 255);border-top:1px solid #000;"></div></div><div class="lab" style="top:34.2px">3500</div><div class="lab" style="top:68.9px">3400</div><div class="lab" style="top:103.5px">3300</div><div class="lab" style="top:138.2px">3200</div><div class="lab" style="top:172.8px">3100</div><div class="lab" style="top:207.4px">3000</div><div class="lab" style="top:242.1px">2900</div><div class="lab" style="top:276.7px">2800</div><div class="lab" style="top:311.4px">2700</div><div class="lab" style="top:346.0px">2600</div><div class="lab" style="top:380.6px">2500</div><div class="lab" style="top:415.3px">2400</div><div class="lab" style="top:449.9px">2300</div><div class="lab" style="top:484.6px">2200</div><div class="lab" style="top:519.2px">2100</div><div class="lab" style="top:553.8px">2000</div><div class="lab" style="top:588.5px">1900</div><div class="lab" style="top:623.1px">1800</div><div class="lab" style="top:657.8px">1700</div><div class="lab" style="top:692.4px">1600</div><div class="lab" style="top:727.0px">1500</div><div class="lab" style="top:761.7px">1400</div><div class="lab" style="top:796.3px">1300</div><div class="lab" style="top:831.0px">1200</div><div class="lab" style="top:865.6px">1100</div><div class="lab" style="top:900.2px">1000</div><div class="lab" style="top:934.9px">900</div><div class="lab" style="top:969.5px">800</div><div class="lab" style="top:1004.2px">700</div><div class="lab" style="top:1038.8px">600</div><div class="lab" style="top:1073.4px">500</div><div class="lab" style="top:1108.1px">400</div><div class="lab" style="top:1142.7px">300</div><div class="lab" style="top:1177.4px">200</div><div class="lab" style="top:1212.0px">100</div><div class="scale"></div><svg width="1400" height="1400" viewBox="0 0 1400 1400" style="position:absolute;left:0;top:0"><line x1="14.3" y1="1358" x2="354.98" y2="1358" stroke="#000" stroke-width="1.6"/><line x1="14.3" y1="1357.5" x2="14.3" y2="1363.5" stroke="#000" stroke-width="1.6"/><line x1="71.1" y1="1357.5" x2="71.1" y2="1363.5" stroke="#000" stroke-width="1.6"/><line x1="127.9" y1="1357.5" x2="127.9" y2="1363.5" stroke="#000" stroke-width="1.6"/><line x1="184.6" y1="1357.5" x2="184.6" y2="1363.5" stroke="#000" stroke-width="1.6"/><line x1="241.4" y1="1357.5" x2="241.4" y2="1363.5" stroke="#000" stroke-width="1.6"/><line x1="298.2" y1="1357.5" x2="298.2" y2="1363.5" stroke="#000" stroke-width="1.6"/><line x1="355.0" y1="1357.5" x2="355.0" y2="1363.5" stroke="#000" stroke-width="1.6"/></svg><div class="sl" style="left:7.6px">0</div><div class="sl" style="left:57.7px">10</div><div class="sl" style="left:114.5px">20</div><div class="sl" style="left:171.3px">30</div><div class="sl" style="left:228.1px">40</div><div class="sl" style="left:284.8px">50</div><div class="sl" style="left:341.6px">60km</div><div class="geo"><svg width="86" height="121" viewBox="0 0 86 121" style="position:absolute;left:0;top:0">
<g transform="scale(0.08646)" fill="none" stroke-linecap="round" stroke-width="18">
<g stroke="#0b2a30">
<circle cx="255" cy="410" r="30"/>
<path d="M205,465 Q270,520 325,440 Q355,380 320,320 Q290,290 255,300"/>
<path d="M225,625 Q385,560 390,400 Q385,290 320,250"/>
<path d="M410,210 Q500,290 450,430 Q380,580 395,700 Q405,760 430,790"/>
<path d="M600,215 Q640,330 590,440 Q555,515 620,520 Q720,530 790,550"/>
<path d="M720,300 Q650,360 685,425 Q720,480 790,500"/>
<path d="M760,350 Q730,400 790,450"/>
<path d="M530,790 Q535,670 650,645 Q715,635 750,660"/>
<path d="M630,760 Q635,690 720,695"/>
</g>
<path stroke="#b5c63a" stroke-width="22" d="M480,195 Q565,270 530,400 Q480,510 455,560 Q470,625 560,605 Q680,575 770,600"/>
</g></svg><div class="g1">GeoSphere</div><div class="g2">Austria</div></div><div class="snow"><svg width="114" height="112" viewBox="0 0 114 112" style="position:absolute;left:0;top:0">
<g transform="scale(0.08357)">
<path fill="#20a3f0" d="M315,780 L670,430 L705,430 L865,555 L885,540 L905,518 L935,518 L960,528 L1000,528 L1035,560 L1045,605 L1075,650 L1085,690 L1080,745 L1062,772 L880,950 L850,950 L690,800 L510,950 L470,950 Z"/>
<path fill="#fff" d="M680,470 L700,458 L865,585 L890,570 L912,545 L935,545 L960,555 L995,555 L1015,580 L1022,620 L1050,660 L1058,700 L1052,740 L1035,760 L995,765 L950,745 L915,715 Z"/>
<path fill="none" stroke="#20a3f0" stroke-width="14" d="M965,670 Q995,690 970,715"/>
</g></svg></div></body></html>
